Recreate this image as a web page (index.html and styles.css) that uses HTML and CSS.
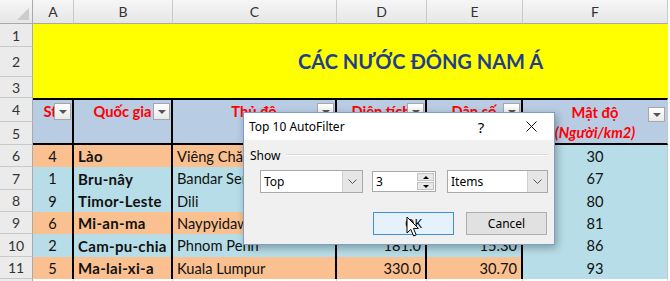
FILE: index.html
```html
<!DOCTYPE html>
<html lang="vi">
    <head>
        <meta charset="UTF-8" />
        <meta name="viewport" content="width=device-width, initial-scale=1.0" />
        <title>Top 10 AutoFilter</title>
        <link rel="stylesheet" href="styles.css">
    </head>
    <body>
        <div class="sheet">
            <div class="corner"><span class="corner_mark"></span></div>
            <div class="col_head">A</div>
            <div class="col_head">B</div>
            <div class="col_head">C</div>
            <div class="col_head">D</div>
            <div class="col_head">E</div>
            <div class="col_head">F</div>

            <div class="row_head">1</div>
            <div class="title">CÁC NƯỚC ĐÔNG NAM Á</div>
            <div class="row_head">2</div>
            <div class="row_head">3</div>

            <div class="row_head">4</div>
            <div class="head">Stt<span class="filter"></span></div>
            <div class="head">Quốc gia<span class="filter"></span></div>
            <div class="head">Thủ đô<span class="filter"></span></div>
            <div class="head">Diện tích<span class="filter"></span></div>
            <div class="head">Dân số<span class="filter"></span></div>
            <div class="head head_last">
                <span>Mật độ</span>
                <span class="head_sub">(Người/km2)</span>
                <span class="filter filter_f"></span>
            </div>
            <div class="row_head">5</div>

            <!-- D and E of rows 6-9 sit under the dialog -->
            <div class="row_head">6</div>
            <div class="cell orange num">4</div>
            <div class="cell orange name">Lào</div>
            <div class="cell orange">Viêng Chăn</div>
            <div class="cell orange right"></div>
            <div class="cell orange right"></div>
            <div class="cell blue num last">30</div>

            <div class="row_head">7</div>
            <div class="cell blue num">1</div>
            <div class="cell blue name">Bru-nây</div>
            <div class="cell blue">Bandar Seri Begawan</div>
            <div class="cell blue right"></div>
            <div class="cell blue right"></div>
            <div class="cell blue num last">67</div>

            <div class="row_head">8</div>
            <div class="cell blue num">9</div>
            <div class="cell blue name">Timor-Leste</div>
            <div class="cell blue">Dili</div>
            <div class="cell blue right"></div>
            <div class="cell blue right"></div>
            <div class="cell blue num last">80</div>

            <div class="row_head">9</div>
            <div class="cell orange num">6</div>
            <div class="cell orange name">Mi-an-ma</div>
            <div class="cell orange">Naypyidaw</div>
            <div class="cell orange right"></div>
            <div class="cell orange right"></div>
            <div class="cell blue num last">81</div>

            <div class="row_head">10</div>
            <div class="cell blue num">2</div>
            <div class="cell blue name">Cam-pu-chia</div>
            <div class="cell blue">Phnom Penh</div>
            <div class="cell blue right">181.0</div>
            <div class="cell blue right">15.30</div>
            <div class="cell blue num last">86</div>

            <div class="row_head">11</div>
            <div class="cell orange num">5</div>
            <div class="cell orange name">Ma-lai-xi-a</div>
            <div class="cell orange">Kuala Lumpur</div>
            <div class="cell orange right">330.0</div>
            <div class="cell orange right">30.70</div>
            <div class="cell blue num last">93</div>

            <div class="row_head"></div>
            <div class="cell empty"></div>
            <div class="cell empty"></div>
            <div class="cell empty"></div>
            <div class="cell empty"></div>
            <div class="cell empty"></div>
            <div class="cell empty"></div>

            <!-- dialog over the sheet -->
            <div class="dialog">
                <div class="dlg_title">
                    <span class="dlg_caption">Top 10 AutoFilter</span>
                    <span class="tb_btn tb_help">?</span>
                    <span class="tb_btn">
                        <svg width="11" height="11" viewBox="0 0 11 11">
                            <path d="M0.5 0.5 L10.5 10.5 M10.5 0.5 L0.5 10.5" stroke="#111" stroke-width="1" fill="none" />
                        </svg>
                    </span>
                </div>
                <div class="dlg_body">
                    <div class="group_row">
                        <span>Show</span>
                        <span class="group_line"></span>
                    </div>
                    <div class="controls">
                        <div class="combo combo_top">
                            <span class="combo_text">Top</span>
                            <span class="combo_arrow">
                                <svg width="9" height="5" viewBox="0 0 9 5">
                                    <path d="M0.5 0.5 L4.5 4.5 L8.5 0.5" stroke="#555" fill="none" />
                                </svg>
                            </span>
                        </div>
                        <div class="spin">
                            <span class="combo_text">3</span>
                            <span class="spin_btns">
                                <span class="spin_btn"><span class="tri_up"></span></span>
                                <span class="spin_btn"><span class="tri_down"></span></span>
                            </span>
                        </div>
                        <div class="combo combo_items">
                            <span class="combo_text">Items</span>
                            <span class="combo_arrow">
                                <svg width="9" height="5" viewBox="0 0 9 5">
                                    <path d="M0.5 0.5 L4.5 4.5 L8.5 0.5" stroke="#555" fill="none" />
                                </svg>
                            </span>
                        </div>
                    </div>
                    <div class="buttons">
                        <div class="btn btn_ok">OK</div>
                        <div class="btn">Cancel</div>
                    </div>
                </div>
            </div>

            <svg class="cursor" width="14" height="22" viewBox="0 0 14 22">
                <path d="M1 1 L1 17 L4.8 13.4 L7.6 20 L10.2 18.9 L7.4 12.4 L12.4 12.4 Z" fill="#fff" stroke="#000" stroke-width="1" stroke-linejoin="round" />
            </svg>
        </div>
    </body>
</html>
```

FILE: styles.css
```css
body {
    margin: 0;
    background-color: #ffffff;
    font-family: "Lato", "Open Sans", sans-serif;
}

.sheet {
    position: relative;
    width: 670px;
    height: 281px;
    overflow: hidden;
    display: grid;
    grid-template-columns: 33px 41px 99px 164px 90px 96px 145px;
    grid-template-rows: 24px 23px 30px 21px 24px 23px 22px 23px 22px 22px 23px 22px 10px;
}

.sheet > div {
    box-sizing: border-box;
}

/* headers of the sheet */
.corner {
    position: relative;
    background: linear-gradient(#f6f6f6, #e6e6e6);
    border-right: 1px solid #a9a9a9;
    border-bottom: 1px solid #a9a9a9;
}

.corner_mark {
    position: absolute;
    right: 3px;
    bottom: 3px;
    width: 0;
    height: 0;
    border-left: 12px solid transparent;
    border-bottom: 12px solid #cccccc;
}

.col_head {
    display: flex;
    align-items: center;
    justify-content: center;
    background: linear-gradient(#f6f6f6, #e6e6e6);
    border-right: 1px solid #c9c9c9;
    border-bottom: 1px solid #a9a9a9;
    color: #333333;
    font-size: 14px;
}

.row_head {
    display: flex;
    align-items: center;
    justify-content: center;
    background-color: #ebebeb;
    border-right: 1px solid #a9a9a9;
    border-bottom: 1px solid #c9c9c9;
    color: #333333;
    font-size: 14px;
}

/* title block */
.title {
    grid-column: 2 / 8;
    grid-row: span 3;
    display: flex;
    align-items: center;
    justify-content: center;
    padding-left: 140px;
    background-color: #ffff00;
    color: #1f3e8c;
    font-size: 20px;
    font-weight: bold;
}

/* table header, rows 4-5 */
.head {
    position: relative;
    grid-row: span 2;
    display: flex;
    justify-content: center;
    padding-top: 2px;
    background-color: #b8cce4;
    border-top: 2px solid #000;
    border-bottom: 2px solid #000;
    border-right: 2px solid #000;
    color: #ff0000;
    font-size: 14.67px;
    font-weight: bold;
    line-height: 20px;
    white-space: nowrap;
}

.head_last {
    flex-direction: column;
    align-items: center;
    border-right: 1px solid #c6c6c6;
}

.head_sub {
    font-style: italic;
}

.filter {
    position: absolute;
    right: 1px;
    top: 3px;
    width: 17px;
    height: 17px;
    box-sizing: border-box;
    border: 1px solid #a6a6a6;
    background: linear-gradient(#ffffff, #e9e9e9);
}

.filter::after {
    content: "";
    position: absolute;
    left: 4px;
    top: 6px;
    border-left: 4px solid transparent;
    border-right: 4px solid transparent;
    border-top: 4px solid #555;
}

.filter_f {
    top: 7px;
    right: 2px;
    height: 15px;
}

.filter_f::after {
    top: 5px;
}

/* data cells */
.cell {
    display: flex;
    align-items: center;
    padding: 0 4px;
    border-right: 2px solid #000;
    font-size: 14.67px;
    color: #111;
    white-space: nowrap;
    overflow: hidden;
}

.cell.last {
    border-right: 1px solid #c6c6c6;
}

.orange {
    background-color: #fac090;
}

.blue {
    background-color: #b7dee8;
}

.num {
    justify-content: center;
}

.name {
    font-weight: bold;
    font-size: 15px;
    letter-spacing: 0.3px;
}

.right {
    justify-content: flex-end;
}

.empty {
    background-color: #ffffff;
    border-right: 1px solid #d4d4d4;
}

/* Top 10 AutoFilter dialog */
.dialog {
    position: absolute;
    left: 243px;
    top: 112px;
    width: 312px;
    height: 133px;
    display: flex;
    flex-direction: column;
    background-color: #f0f0f0;
    border: 1px solid #7d9ec8;
    box-shadow: 2px 3px 8px rgba(0, 0, 0, 0.3);
    font-family: "Noto Sans", "Open Sans", sans-serif;
    font-size: 12px;
    color: #000;
}

.dlg_title {
    height: 27px;
    display: flex;
    align-items: center;
    background-color: #ffffff;
    padding-left: 5px;
}

.dlg_caption {
    flex: 1;
}

.tb_btn {
    width: 46px;
    height: 27px;
    display: flex;
    align-items: center;
    justify-content: center;
    font-size: 15px;
}

.tb_help {
    margin-right: 4px;
}

.dlg_body {
    padding: 7px 6px 0 6px;
    display: flex;
    flex-direction: column;
}

.group_row {
    display: flex;
    align-items: center;
    height: 16px;
}

.group_line {
    flex: 1;
    margin-left: 6px;
    border-top: 1px solid #dadada;
    border-bottom: 1px solid #ffffff;
}

.controls {
    display: flex;
    margin-top: 7px;
    margin-left: 10px;
    height: 23px;
}

.combo {
    display: flex;
    box-sizing: border-box;
    border: 1px solid #a9a9a9;
    background-color: #ffffff;
}

.combo_top {
    width: 103px;
}

.combo_items {
    width: 101px;
    margin-left: 11px;
}

.combo_text {
    flex: 1;
    display: flex;
    align-items: center;
    padding-left: 3px;
}

.combo_arrow {
    width: 19px;
    display: flex;
    align-items: center;
    justify-content: center;
    background-color: #e6e6e6;
    border-left: 1px solid #cfcfcf;
}

.spin {
    display: flex;
    box-sizing: border-box;
    width: 64px;
    height: 21px;
    margin-top: 1px;
    margin-left: 9px;
    border: 1px solid #a9a9a9;
    background-color: #ffffff;
}

.spin_btns {
    width: 17px;
    display: flex;
    flex-direction: column;
    padding: 1px;
    gap: 1px;
}

.spin_btn {
    flex: 1;
    display: flex;
    align-items: center;
    justify-content: center;
    background-color: #e8e8e8;
    border: 1px solid #c4c4c4;
}

.tri_up {
    border-left: 3px solid transparent;
    border-right: 3px solid transparent;
    border-bottom: 3px solid #000;
}

.tri_down {
    border-left: 3px solid transparent;
    border-right: 3px solid transparent;
    border-top: 3px solid #000;
}

.buttons {
    display: flex;
    gap: 12px;
    margin-top: 19px;
    margin-left: 123px;
}

.btn {
    width: 81px;
    height: 23px;
    box-sizing: border-box;
    display: flex;
    align-items: center;
    justify-content: center;
    background-color: #e1e1e1;
    border: 1px solid #adadad;
}

.btn_ok {
    background-color: #e5f1fb;
    border-color: #3c8fdc;
}

.cursor {
    position: absolute;
    left: 406px;
    top: 216px;
}
```
